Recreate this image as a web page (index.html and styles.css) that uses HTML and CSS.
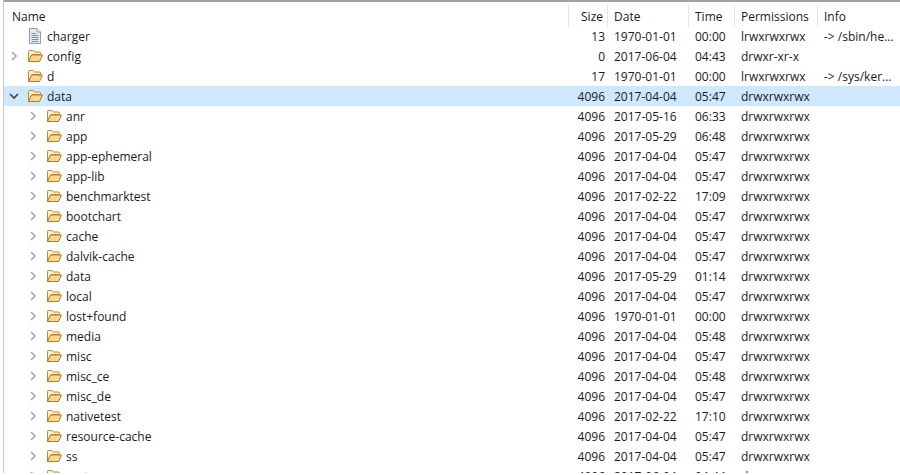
FILE: index.html
```html
<!DOCTYPE html>
<html lang="en">
<head>
  <meta charset="UTF-8">
  <title>File Explorer</title>
  <meta name="viewport" content="width=device-width, initial-scale=1.0">
  <link rel="stylesheet" href="styles.css">
</head>
<body>

<svg class="defs" width="0" height="0">
  <symbol id="folder" viewBox="0 0 16 14">
    <path d="M1.5 12.5V2.5Q1.5 1.5 2.5 1.5H6L7.5 3H12.5Q13.5 3 13.5 4V5.5H5L1.5 12.5Z" fill="#fdf1c9" stroke="#b98a3e"/>
    <path d="M1.5 12.5L4.5 6H15.5L12.5 12.5Z" fill="#fbd88e" stroke="#b5772a" stroke-linejoin="round"/>
  </symbol>
  <symbol id="file" viewBox="0 0 14 16">
    <path d="M1.5 .5H9L12.5 4V15.5H1.5Z" fill="#e6ebf6" stroke="#8d9ab8"/>
    <path d="M9 .5V4H12.5" fill="#fff" stroke="#8d9ab8"/>
    <path d="M3.5 5.5H8M3.5 7.5H10.5M3.5 9.5H10.5M3.5 11.5H10.5M3.5 13.5H10.5" stroke="#7f8ca8"/>
  </symbol>
  <symbol id="closed" viewBox="0 0 10 10">
    <path d="M3 1L7 5L3 9" fill="none" stroke="#a6a6a6" stroke-width="1.6"/>
  </symbol>
  <symbol id="open" viewBox="0 0 10 10">
    <path d="M1 3L5 7L9 3" fill="none" stroke="#404040" stroke-width="1.6"/>
  </symbol>
</svg>

<div class="explorer">
  <div class="head">
    <div class="col-name">Name</div>
    <div class="col-size">Size</div>
    <div class="col-date">Date</div>
    <div class="col-time">Time</div>
    <div class="col-perm">Permissions</div>
    <div class="col-info">Info</div>
  </div>
  <div id="rows"></div>
</div>

<script>
  const folders = [
    ["anr", "2017-05-16", "06:33"],
    ["app", "2017-05-29", "06:48"],
    ["app-ephemeral", "2017-04-04", "05:47"],
    ["app-lib", "2017-04-04", "05:47"],
    ["benchmarktest", "2017-02-22", "17:09"],
    ["bootchart", "2017-04-04", "05:47"],
    ["cache", "2017-04-04", "05:47"],
    ["dalvik-cache", "2017-04-04", "05:47"],
    ["data", "2017-05-29", "01:14"],
    ["local", "2017-04-04", "05:47"],
    ["lost+found", "1970-01-01", "00:00"],
    ["media", "2017-04-04", "05:48"],
    ["misc", "2017-04-04", "05:47"],
    ["misc_ce", "2017-04-04", "05:48"],
    ["misc_de", "2017-04-04", "05:47"],
    ["nativetest", "2017-02-22", "17:10"],
    ["resource-cache", "2017-04-04", "05:47"],
    ["ss", "2017-04-04", "05:47"],
    ["system", "2017-06-04", "04:44"]
  ];

  const top_rows = [
    { name: "charger", icon: "file", size: 13, date: "1970-01-01", time: "00:00", perm: "lrwxrwxrwx", info: "-> /sbin/he..." },
    { name: "config", arrow: "closed", size: 0, date: "2017-06-04", time: "04:43", perm: "drwxr-xr-x" },
    { name: "d", size: 17, date: "1970-01-01", time: "00:00", perm: "lrwxrwxrwx", info: "-> /sys/ker..." },
    { name: "data", arrow: "open", size: 4096, date: "2017-04-04", time: "05:47", perm: "drwxrwxrwx", selected: true }
  ];

  const rows = top_rows.concat(folders.map(function (f) {
    return { name: f[0], arrow: "closed", size: 4096, date: f[1], time: f[2], perm: "drwxrwxrwx", child: true };
  }));

  document.getElementById("rows").innerHTML = rows.map(function (r) {
    const arrow = r.arrow ? `<svg class="arrow"><use href="#${r.arrow}"/></svg>` : `<span class="arrow"></span>`;
    const icon = r.icon === "file"
      ? `<svg class="icon-file"><use href="#file"/></svg>`
      : `<svg class="icon-folder"><use href="#folder"/></svg>`;
    return `
      <div class="row${r.selected ? " selected" : ""}">
        <div class="col-name${r.child ? " child" : ""}">${arrow}<span class="icon">${icon}</span>${r.name}</div>
        <div class="col-size">${r.size}</div>
        <div class="col-date">${r.date}</div>
        <div class="col-time">${r.time}</div>
        <div class="col-perm">${r.perm}</div>
        <div class="col-info">${r.info || ""}</div>
      </div>`;
  }).join("");
</script>

</body>
</html>
```

FILE: styles.css
```css
* {
  box-sizing: border-box;
}

html, body {
  height: 100%;
}

body {
  margin: 0;
  overflow: hidden;
  background: white;
  font-family: "Open Sans", "Noto Sans", sans-serif;
  font-size: 12px;
  color: #1a1a1a;
}

.defs {
  display: block;
  height: 0;
}

.explorer {
  height: 473px;
  overflow: hidden;
  margin-left: 3px;
  border-left: 1px solid #c8c8c8;
}

.head,
.row {
  display: grid;
  grid-template-columns: 563px 39px 81px 46px 83px 1fr;
  padding-left: 2px;
}

.head {
  height: 26px;
  padding-top: 3px;
  border-top: 2px solid #a0a0a0;
  align-items: stretch;
}

.head > div {
  display: flex;
  align-items: center;
  height: 22px;
  border-right: 1px solid #e4e4e4;
  padding-left: 6px;
}

.head .col-size {
  justify-content: flex-end;
  padding-right: 4px;
}

.head .col-info {
  border-right: none;
}

.row {
  height: 20px;
  align-items: center;
  white-space: nowrap;
}

.row.selected {
  background: #cde8ff;
}

.row .col-name {
  display: flex;
  align-items: center;
  padding-left: 3px;
}

.row .col-name.child {
  padding-left: 22px;
}

.row .col-size {
  text-align: right;
  padding-right: 3px;
}

.row .col-date {
  padding-left: 6px;
}

.row .col-time {
  padding-left: 6px;
}

.row .col-perm {
  padding-left: 6px;
}

.row .col-info {
  padding-left: 6px;
}

.arrow {
  width: 10px;
  height: 10px;
  flex: none;
  margin-right: 8px;
}

.icon {
  display: flex;
  justify-content: center;
  width: 16px;
  margin-right: 4px;
}

.icon-folder {
  width: 16px;
  height: 14px;
}

.icon-file {
  width: 14px;
  height: 16px;
}
```
